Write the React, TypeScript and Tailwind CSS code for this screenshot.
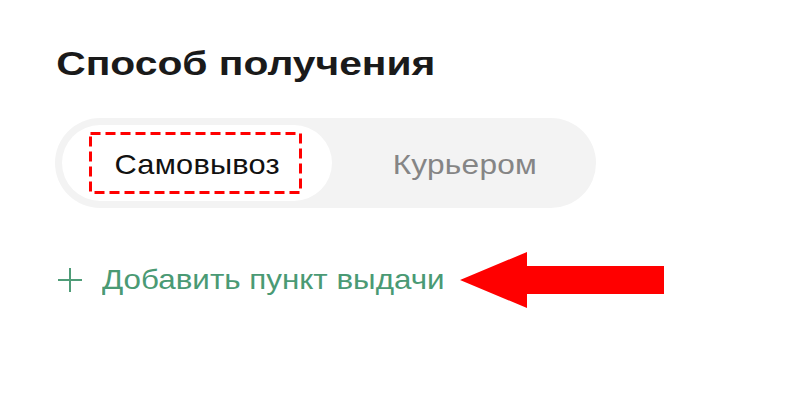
import React from "react";

export default function App() {
  return (
    <div className="relative w-[808px] h-[417px] bg-white overflow-hidden" style={{ fontFamily: "'Liberation Sans', Arial, sans-serif" }}>
      <div className="flex flex-col pl-[55px] pt-[43px]">
        <h1 className="self-start origin-left scale-x-[1.2] text-[34px] leading-[40px] font-bold text-[#1a1a1a] pl-[1px]">Способ получения</h1>
        <div className="mt-[35px] flex w-[541px] h-[90px] rounded-full bg-[#f3f3f3] p-[7px]">
          <div className="relative flex w-[270px] items-center justify-center rounded-full bg-white">
            <span className="inline-block scale-x-[1.1] text-[28px] tracking-[0.2px] text-[#111] mt-[3px]">Самовывоз</span>
            <svg className="absolute left-[27px] top-[7px]" width="213" height="62" viewBox="0 0 213 62">
              <rect x="1.5" y="1.5" width="210" height="59" fill="none" stroke="#ff0000" strokeWidth="3" strokeDasharray="10 5" />
            </svg>
          </div>
          <div className="flex flex-1 items-center justify-center">
            <span className="inline-block scale-x-[1.13] text-[28px] tracking-[0.2px] text-[#858585] ml-[8px] mt-[3px]">Курьером</span>
          </div>
        </div>
        <div className="mt-[56px] flex items-center gap-[19px]">
          <svg width="26" height="26" viewBox="0 0 26 26" className="ml-[2px]">
            <path d="M13 1v24M1 13h24" stroke="#4f9c78" strokeWidth="2" />
          </svg>
          <span className="inline-block origin-left scale-x-[1.12] text-[28px] leading-[32px] text-[#4a9a74]">Добавить пункт выдачи</span>
        </div>
      </div>
      <svg className="absolute left-[458px] top-[250px]" width="208" height="60" viewBox="458 250 208 60">
        <polygon points="460,280 527,252 527,266 664,266 664,294 527,294 527,308" fill="#ff0000" />
      </svg>
    </div>
  );
}
